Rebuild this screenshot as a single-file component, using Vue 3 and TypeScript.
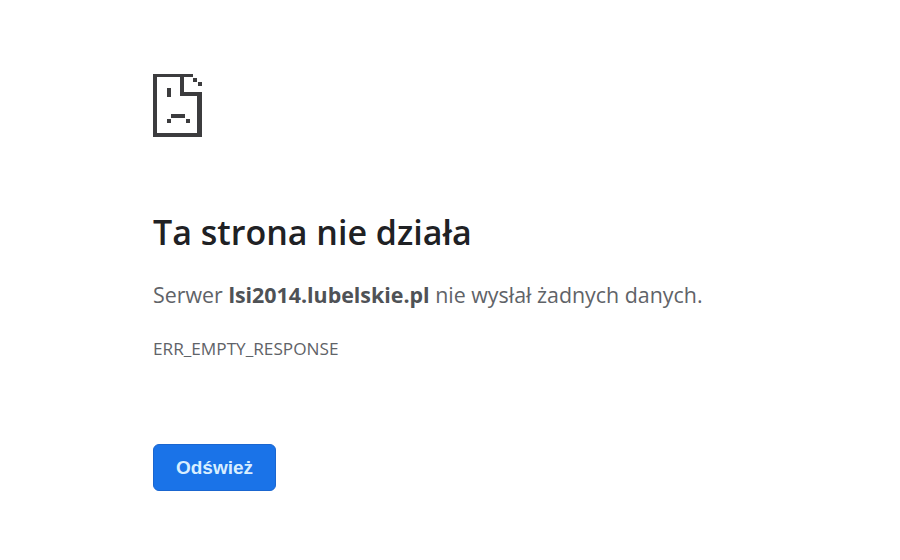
<script setup lang="ts">
const host = 'lsi2014.lubelskie.pl'
</script>

<template>
  <main class="page">
    <svg class="icon" width="49" height="63" viewBox="0 0 49 63" aria-hidden="true">
      <g fill="#3c3c3e">
        <rect x="0" y="0" width="4" height="63" />
        <rect x="0" y="0" width="40" height="3" />
        <rect x="0" y="59" width="49" height="4" />
        <rect x="44" y="19" width="5" height="44" />
        <rect x="27" y="0" width="4" height="22" />
        <rect x="27" y="18" width="22" height="4" />
        <rect x="40" y="4" width="4" height="4" />
        <rect x="45" y="8" width="4" height="4" />
        <rect x="14" y="14" width="4" height="9" />
        <rect x="18" y="40" width="14" height="4" />
        <rect x="14" y="45" width="4" height="4" />
        <rect x="33" y="45" width="4" height="4" />
      </g>
    </svg>
    <h1 class="title">Ta strona nie działa</h1>
    <p class="message">Serwer <strong>{{ host }}</strong> nie wysłał żadnych danych.</p>
    <p class="code">ERR_EMPTY_RESPONSE</p>
    <button class="reload" type="button">Odśwież</button>
  </main>
</template>

<style>
html, body { background: #fff; }
</style>

<style scoped>
.page {
  display: flex;
  flex-direction: column;
  align-items: flex-start;
  box-sizing: border-box;
  width: 900px;
  height: 560px;
  overflow: hidden;
  padding: 74px 0 0 153px;
  font-family: "Open Sans", "Noto Sans", sans-serif;
}
.icon { display: block; }
.title {
  margin: 73px 0 0;
  font-size: 34px;
  line-height: 44px;
  font-weight: 600;
  color: #202124;
}
.message {
  margin: 27px 0 0;
  font-size: 21.4px;
  line-height: 28px;
  color: #5f6368;
}
.message strong { font-weight: 700; color: #4f5256; }
.code {
  margin: 30px 0 0;
  font-size: 17.2px;
  line-height: 20px;
  color: #5f6368;
}
.reload {
  margin-top: 85px;
  width: 123px;
  height: 47px;
  border: 1px solid #1a66d0;
  border-radius: 6px;
  background: #1a73e8;
  color: #d8eeff;
  font-family: "Liberation Sans", sans-serif;
  font-size: 19px;
  font-weight: 700;
  padding: 0;
}
</style>
